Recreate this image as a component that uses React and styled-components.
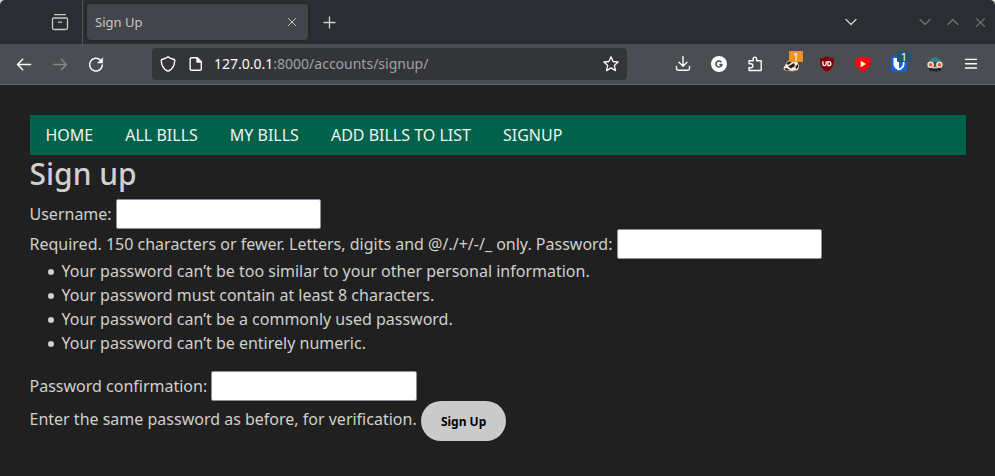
import React from "react";
import styled, { createGlobalStyle } from "styled-components";

const GlobalStyle = createGlobalStyle`
  *, *::before, *::after { box-sizing: border-box; }
  body {
    margin: 0;
    background: #202020;
    color: #d0cfcc;
    font-family: "Noto Sans", "Open Sans", sans-serif;
    font-size: 16px;
    line-height: 24px;
  }
`;

const Window = styled.div`
  width: 995px;
  height: 476px;
  overflow: hidden;
  background: #202020;
`;

const Backdrop = styled.div`
  background: #d8d8d6;
`;

const TabStrip = styled.div`
  height: 44px;
  display: flex;
  align-items: center;
  background: #2a2e32;
  border-radius: 5px 5px 0 0;
`;

const RecentTabs = styled.div`
  width: 83px;
  height: 44px;
  padding-left: 51px;
  display: flex;
  align-items: center;
  border-right: 1px solid #53575b;
`;

const Tab = styled.div`
  width: 221px;
  height: 36px;
  margin-left: 4px;
  padding: 0 11px 0 8px;
  display: flex;
  align-items: center;
  justify-content: space-between;
  border-radius: 4px;
  background: #424549;
  box-shadow: 0 0 3px rgba(0, 0, 0, 0.4);
  color: #c3c5c7;
  font-size: 13px;
`;

const NewTab = styled.div`
  display: flex;
  margin-left: 15px;
  flex: 1;
`;

const WindowControls = styled.div`
  display: flex;
  align-items: center;
  gap: 16px;
  padding-right: 9px;
`;

const TabsMenu = styled.div`
  display: flex;
  margin-right: 62px;
`;

const Toolbar = styled.div`
  height: 41px;
  display: flex;
  align-items: center;
  padding: 0 14px 0 16px;
  background: #4a4d51;
  border-bottom: 1px solid #63676a;
`;

const IconRow = styled.div`
  display: flex;
  align-items: center;
  gap: ${(p) => p.$gap}px;
`;

const AddressBar = styled.div`
  width: 475px;
  height: 32px;
  margin-right: auto;
  margin-left: 48px;
  padding: 0 8px;
  display: flex;
  align-items: center;
  gap: 12px;
  border-radius: 4px;
  background: #343539;
`;

const Url = styled.div`
  flex: 1;
  margin-left: -2px;
  font-size: 14px;
  color: #a0a1a3;
`;

const Host = styled.span`
  color: #fbfbfe;
`;

const Svg = styled.svg`
  display: block;
  flex: none;
  overflow: visible;
  fill: none;
  stroke: ${(p) => p.$color || "#fbfbfe"};
  stroke-width: ${(p) => p.$weight || 1.4};
  stroke-linecap: round;
  stroke-linejoin: round;
`;

const Extension = styled.div`
  position: relative;
  width: 20px;
  height: 20px;
  display: grid;
  place-items: center;
`;

const Badge = styled.span`
  position: absolute;
  top: -3px;
  right: -2px;
  width: 14px;
  height: 11px;
  border-radius: 1px;
  background: ${(p) => p.$color};
  color: #fff;
  font-size: 11px;
  line-height: 11px;
  text-align: center;
`;

const Page = styled.main`
  padding: 30px 29px 0 29.5px;
`;

const Nav = styled.nav`
  display: flex;
  height: 40px;
  background: #00624a;
`;

const NavLink = styled.a`
  padding: 8px 16px;
  color: #f3f1ee;
`;

const Title = styled.h2`
  height: 44px;
  margin: 0;
  font-size: 30px;
  font-weight: 500;
  line-height: 38px;
`;

const Row = styled.div`
  display: flex;
  align-items: center;
  height: 30px;
  white-space: pre;
`;

const TextField = styled.input`
  width: 205.5px;
  height: 30px;
  margin: 0;
  margin-left: 4px;
  border: 1px solid #8f8f9d;
  border-radius: 2px;
  background: #fff;
`;

const Rules = styled.ul`
  margin: 0 0 16px;
  padding-left: 18px;
  list-style: none;
`;

const Rule = styled.li`
  display: flex;
  align-items: center;
  gap: 8px;

  &::before {
    content: "";
    width: 6px;
    height: 6px;
    margin-top: 2px;
    border-radius: 50%;
    background: currentColor;
  }
`;

const SubmitRow = styled.div`
  display: flex;
  height: 40px;
`;

const Hint = styled.span`
  padding-top: 6px;
`;

const Submit = styled.button`
  width: 85px;
  height: 40px;
  margin-left: 4.4px;
  padding: 0;
  border: 0;
  border-radius: 20px;
  background: #cacaca;
  color: #000;
  font: bold 12px "Noto Sans", sans-serif;
`;

const Chevron = ({ up, color, weight }) => (
  <Svg width="12" height="12" viewBox="0 0 12 12" $color={color} $weight={weight}>
    <path d={up ? "M1 8.5l5-5 5 5" : "M1 3.5l5 5 5-5"} />
  </Svg>
);

const Cross = ({ size, color }) => (
  <Svg width={size} height={size} viewBox="0 0 10 10" $color={color} $weight="1">
    <path d="M1.4 1.4l7.2 7.2M8.6 1.4l-7.2 7.2" />
  </Svg>
);

const nav = ["HOME", "ALL BILLS", "MY BILLS", "ADD BILLS TO LIST", "SIGNUP"];
const rules = [
  "Your password can’t be too similar to your other personal information.",
  "Your password must contain at least 8 characters.",
  "Your password can’t be a commonly used password.",
  "Your password can’t be entirely numeric.",
];

function BrowserTabs() {
  return (
    <Backdrop>
      <TabStrip>
        <RecentTabs>
          <Svg width="18" height="18" viewBox="0 0 18 18" $color="#c6c8ca" $weight="1.3">
            <path d="M3.6 1.6h10.8M2.7 5h12.6a1.2 1.2 0 0 1 1.2 1.2v8.600a1.700 1.700 0 0 1-1.700 1.700H3.200a1.700 1.700 0 0 1-1.700-1.700V6.200A1.200 1.200 0 0 1 2.700 5zM7.500 9.200h3" />
          </Svg>
        </RecentTabs>
        <Tab>
          <span>Sign Up</span>
          <Cross size={10} color="#c3c5c7" />
        </Tab>
        <NewTab>
          <Svg width="13" height="13" viewBox="0 0 13 13" $color="#d0d2d4" $weight="1.3">
            <path d="M6.5 1v11M1 6.5h11" />
          </Svg>
        </NewTab>
        <TabsMenu>
          <Chevron color="#c3c5c7" weight={1.5} />
        </TabsMenu>
        <WindowControls>
          <Chevron color="#75797c" weight={1.1} />
          <Chevron up color="#75797c" weight={1.1} />
          <Cross size={11} color="#75797c" />
        </WindowControls>
      </TabStrip>
    </Backdrop>
  );
}

function BrowserToolbar() {
  return (
    <Toolbar>
      <IconRow $gap={20}>
        <Svg width="16" height="16" viewBox="0 0 16 16" $weight="1.5">
          <path d="M14.5 8.5h-13M6.7 3.3L1.5 8.5l5.2 5.2" />
        </Svg>
        <Svg width="16" height="16" viewBox="0 0 16 16" $color="#85878a" $weight="1.4">
          <path d="M1.5 8.5h13M9.3 3.3l5.2 5.2-5.2 5.2" />
        </Svg>
        <Svg width="16" height="16" viewBox="0 0 16 16" $weight="1.5">
          <path d="M12.6 4.2A6.4 6.4 0 1 0 14.4 8.9" />
          <path d="M14.7 2v5h-5z" fill="#fbfbfe" strokeWidth="0.5" />
        </Svg>
      </IconRow>
      <AddressBar>
        <Svg width="16" height="16" viewBox="0 0 16 16">
          <path d="M8 .8c1.900 1.600 3.800 2.200 6.100 2.700a.8.8 0 0 1 .6.800c0 4.800-2 8.700-6.100 10.700a1.300 1.300 0 0 1-1.200 0C3.300 13 1.300 9.100 1.300 4.300a.8.8 0 0 1 .6-.8C4.200 3 6.100 2.400 8 .8z" />
        </Svg>
        <Svg width="16" height="16" viewBox="0 0 16 16">
          <path d="M3.5 1.7h5.8l4 4v7.300a1.300 1.300 0 0 1-1.300 1.300H3.500a1.300 1.300 0 0 1-1.300-1.300V3a1.300 1.300 0 0 1 1.300-1.300z" />
          <path d="M9 1.7v4.300h4.300z" fill="#fbfbfe" />
        </Svg>
        <Url><Host>127.0.0.1</Host>:8000/accounts/signup/</Url>
        <Svg width="16" height="16" viewBox="0 0 16 16" $weight="1.3">
          <path d="M8 .8l2.1 4.700 5 .5-3.800 3.400 1.200 5.200L8 11.900l-4.500 2.700 1.200-5.200L.9 6l5-.5z" />
        </Svg>
      </AddressBar>
      <IconRow $gap={16}>
        <Extension>
          <Svg width="16" height="16" viewBox="0 0 16 16">
            <path d="M8 .5v9.500M4 6.300l4 4 4-4M1.500 10.500v2a1.700 1.700 0 0 0 1.700 1.700h9.600a1.700 1.700 0 0 0 1.700-1.700v-2" />
          </Svg>
        </Extension>
        <Extension>
          <Svg width="16" height="16" viewBox="0 0 16 16" $color="none">
            <circle cx="8" cy="8" r="8" fill="#fff" />
            <path d="M10.4 6.2A3 3 0 1 0 10.900 8.500H8.400" stroke="#4a4d51" strokeWidth="1.6" strokeLinecap="butt" />
          </Svg>
        </Extension>
        <Extension>
          <Svg width="16" height="16" viewBox="0 0 16 16" $weight="1.4">
            <path d="M2 7.700V4.700h4.200V2.800a1.700 1.700 0 0 1 3.400 0v1.900h4.600v9.800H2v-2.700h1.800a2 2 0 0 0 0-4.100z" />
          </Svg>
        </Extension>
        <Extension>
          <Svg width="16" height="16" viewBox="0 0 16 16" $color="none">
            <path d="M.5 12L4 6l5-4.500L14 5l2 5-1 4-5 1.300-9-1.300z" fill="#f4eee8" />
            <path d="M3.500 7.500L9 2l1.500 3L5 9zM5 10.500L11 7l1.500 2.500-4.500 3zM12.300 11l2.500-3 .5 3-2 2zM1 12.500l3-.3 3 1.800-4 .2z" fill="#202124" />
            <path d="M2 9.500L4.500 6M1 14l8 1.200 5-1.200M11 8l1.200 3.500" stroke="#ca7238" strokeWidth=".8" />
          </Svg>
          <Badge $color="#ed9321">1</Badge>
        </Extension>
        <Extension>
          <Svg width="16" height="16" viewBox="0 0 16 16" $color="none">
            <path d="M8 .3c2 1.300 4 1.800 6.900 2 .2 6-.9 10.600-6.900 13.500C2 12.900.9 8.300 1.100 2.300 4 2.100 6 1.600 8 .3z" fill="#800000" />
            <path d="M3.900 5.700v2.400a1.600 1.600 0 0 0 3.200 0V5.700M8.900 5.700v4h.9a2 2 0 0 0 0-4z" stroke="#fff" strokeWidth="1.3" />
          </Svg>
        </Extension>
        <Extension>
          <Svg width="16" height="16" viewBox="0 0 16 16" $color="none">
            <path d="M8 .3c2 1.200 4.500 1.800 7.800 2.200 0 6.800-1.800 10.700-7.800 13.200C2 13.200.2 9.300.2 2.500 3.500 2.100 6 1.500 8 .3z" fill="#fc0808" />
            <path d="M5.700 4.700v6.600L11 8z" fill="#fff" />
          </Svg>
        </Extension>
        <Extension>
          <Svg width="16" height="16" viewBox="0 0 16 16" $color="none">
            <rect width="16" height="16" rx="2" fill="#175ddc" />
            <path d="M2.500 2h11v6.200c0 3-2.500 4.900-5.500 6.300-3-1.400-5.500-3.300-5.500-6.300z" fill="#fff" />
            <path d="M8 3.700h3.800v4.500c0 1.900-1.800 3.300-3.800 4.400z" fill="#175ddc" />
          </Svg>
          <Badge $color="#25556b">1</Badge>
        </Extension>
        <Extension>
          <Svg width="16" height="16" viewBox="0 0 16 16" $color="none">
            <path d="M2.200 7.500C2.200 3.500 4.500 1.200 8 1.200s5.800 2.300 5.800 6.300z" fill="#347c86" />
            <path d="M2.500 6h11v1.500h-11z" fill="#23444b" />
            <path d="M2.300 11h11.400v4h-2v-1h-1v1.500H5.300V14h-1v1h-2z" fill="#202124" />
            <path d="M5.800 10.800h4.400l.8 1.700H5z" fill="#c2beb6" />
            <circle cx="3.600" cy="8.800" r="2.500" fill="#e5533f" stroke="#f2d9c9" strokeWidth="1.6" />
            <circle cx="12.400" cy="8.800" r="2.500" fill="#e5533f" stroke="#f2d9c9" strokeWidth="1.6" />
          </Svg>
        </Extension>
        <Extension>
          <Svg width="16" height="16" viewBox="0 0 16 16" $weight="1.4">
            <path d="M2.500 3.400h11M2.500 7.700h11M2.500 12h11" />
          </Svg>
        </Extension>
      </IconRow>
    </Toolbar>
  );
}

export default function App() {
  return (
    <Window>
      <GlobalStyle />
      <BrowserTabs />
      <BrowserToolbar />
      <Page>
        <Nav>
          {nav.map((label) => <NavLink key={label}>{label}</NavLink>)}
        </Nav>
        <Title>Sign up</Title>
        <Row>Username:<TextField /></Row>
        <Row>
          Required. 150 characters or fewer. Letters, digits and @/./+/-/_ only. Password:
          <TextField type="password" />
        </Row>
        <Rules>
          {rules.map((rule) => <Rule key={rule}>{rule}</Rule>)}
        </Rules>
        <Row>Password confirmation:<TextField type="password" /></Row>
        <SubmitRow>
          <Hint>Enter the same password as before, for verification.</Hint>
          <Submit>Sign Up</Submit>
        </SubmitRow>
      </Page>
    </Window>
  );
}
